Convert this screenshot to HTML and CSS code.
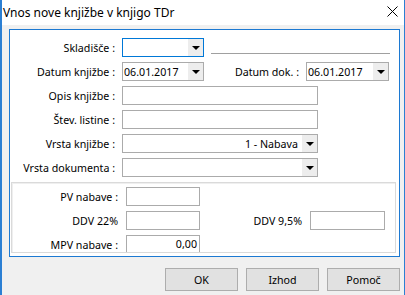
FILE: index.html
```html
<!DOCTYPE html>
<html lang="sl">
<head>
    <meta charset="UTF-8">
    <title>Vnos nove knjižbe v knjigo TDr</title>
    <link rel="stylesheet" href="styles.css">
</head>
<body>
    <div class="window">
        <div class="titlebar">
            <span class="title">Vnos nove knjižbe v knjigo TDr</span>
            <svg class="close" width="11" height="11" viewBox="0 0 11 11">
                <path d="M0.5 0.5 L10.5 10.5 M10.5 0.5 L0.5 10.5" stroke="#000" stroke-width="1" fill="none"/>
            </svg>
        </div>
        <div class="client">
            <div class="panel">
                <div class="row">
                    <span class="lbl">Skladišče :</span>
                    <div class="combo focus w82"><span class="val"></span><span class="arrow"></span></div>
                    <div class="sep"></div>
                </div>
                <div class="row">
                    <span class="lbl">Datum knjižbe :</span>
                    <div class="combo w82"><span class="val">06.01.2017</span><span class="arrow"></span></div>
                    <span class="lbl2">Datum dok. :</span>
                    <div class="combo w83"><span class="val">06.01.2017</span><span class="arrow"></span></div>
                </div>
                <div class="row">
                    <span class="lbl">Opis knjižbe :</span>
                    <div class="box w196"></div>
                </div>
                <div class="row">
                    <span class="lbl">Štev. listine :</span>
                    <div class="box w196"></div>
                </div>
                <div class="row">
                    <span class="lbl">Vrsta knjižbe :</span>
                    <div class="combo w196"><span class="val right">1 - Nabava</span><span class="arrow"></span></div>
                </div>
                <div class="row">
                    <span class="lbl">Vrsta dokumenta :</span>
                    <div class="combo w196"><span class="val"></span><span class="arrow"></span></div>
                </div>

                <div class="sub">
                    <div class="row">
                        <span class="lbl sublbl">PV nabave :</span>
                        <div class="box w74"></div>
                    </div>
                    <div class="row">
                        <span class="lbl sublbl">DDV 22%</span>
                        <div class="box w74"></div>
                        <span class="lbl3">DDV 9,5%</span>
                        <div class="box w75"></div>
                    </div>
                    <div class="row">
                        <span class="lbl sublbl">MPV nabave :</span>
                        <div class="box w74 num">0,00</div>
                    </div>
                </div>
            </div>
            <div class="buttons">
                <button>OK</button>
                <button>Izhod</button>
                <button>Pomoč</button>
            </div>
        </div>
    </div>
</body>
</html>
```

FILE: styles.css
```css
body {
    margin: 0;
    font-family: "Noto Sans", "Liberation Sans", sans-serif;
    font-size: 10.67px;
    color: #000;
    background: #fff;
}
.window {
    width: 405px;
    height: 295px;
    box-sizing: border-box;
    border-left: 2px solid #2b7fd3;
    border-right: 1px solid #2b7fd3;
    background-color: #f0f0f0;
}
.titlebar {
    height: 25px;
    background: #fff;
    display: flex;
    align-items: center;
    padding: 0 6px 0 1px;
}
.title {
    font-size: 12px;
}
.close {
    margin-left: auto;
    margin-top: -3px;
}
.client {
    padding: 4px 4px 0 7px;
}
.panel {
    height: 228px;
    box-sizing: border-box;
    border: 1px solid #1c79d2;
    background: #fff;
    padding: 8px 3px 0 1px;
}
.row {
    display: flex;
    align-items: center;
    height: 19px;
    margin-bottom: 5px;
}
.lbl {
    width: 104px;
    text-align: right;
    margin-right: 7px;
    white-space: nowrap;
}
.lbl2 {
    width: 95px;
    text-align: right;
    margin-right: 7px;
}
.lbl3 {
    width: 102px;
    text-align: right;
    margin-right: 8px;
}
.sublbl {
    width: 106px;
    margin-right: 8px;
}
.box, .combo {
    height: 19px;
    box-sizing: border-box;
    border: 1px solid #ababab;
    background: #fff;
}
.combo {
    display: flex;
    align-items: center;
}
.combo.focus {
    border-color: #0078d7;
}
.combo .val {
    flex: 1;
    padding-left: 1px;
    white-space: nowrap;
}
.combo .val.right {
    text-align: right;
    padding-right: 4px;
}
.combo .arrow {
    width: 15px;
    height: 17px;
    background: #ededed;
    display: flex;
    align-items: center;
    justify-content: center;
}
.combo .arrow::after {
    content: "";
    border-top: 4px solid #000;
    border-left: 4px solid transparent;
    border-right: 4px solid transparent;
}
.num {
    text-align: right;
    padding-right: 2px;
    line-height: 17px;
}
.w82 { width: 82px; }
.w83 { width: 83px; }
.w74 { width: 74px; }
.w75 { width: 75px; }
.w196 { width: 196px; }
.sep {
    align-self: flex-end;
    margin: 0 0 3px 7px;
    width: 179px;
    height: 1px;
    background: #a0a0a0;
}
.sub {
    height: 71px;
    box-sizing: border-box;
    border: 1px solid #dadada;
    box-shadow: inset 1px 1px 0 #efefef;
    padding-top: 4px;
    overflow: hidden;
}
.buttons {
    display: flex;
    justify-content: flex-end;
    gap: 8px;
    margin-top: 11px;
}
.buttons button {
    width: 73px;
    height: 23px;
    background-color: #e1e1e1;
    border: 1px solid #adadad;
    font-family: inherit;
    font-size: 10.67px;
    color: #000;
    padding: 0;
}
```
